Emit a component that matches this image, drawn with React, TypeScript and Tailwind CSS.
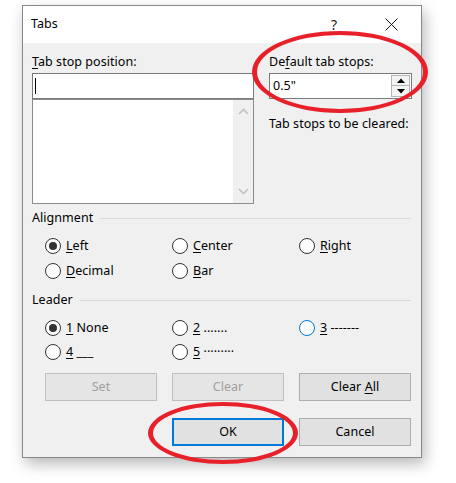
import React from 'react';

const Key: React.FC<{ children: React.ReactNode }> = ({ children }) => (
  <span className="underline underline-offset-2 decoration-1">{children}</span>
);

const Radio: React.FC<{ checked?: boolean; focus?: boolean; children: React.ReactNode }> = ({ checked, focus, children }) => (
  <div className="flex items-center h-4 gap-[5px]">
    <span
      className={`w-4 h-4 shrink-0 rounded-full bg-white flex items-center justify-center ${
        focus ? 'border-[1.5px] border-[#0078d7]' : 'border-[1.3px] border-[#333333]'
      }`}
    >
      {checked && <span className="w-2 h-2 rounded-full bg-[#333333]" />}
    </span>
    <span className="leading-4 whitespace-nowrap">{children}</span>
  </div>
);

const Button: React.FC<{ disabled?: boolean; primary?: boolean; children: React.ReactNode }> = ({ disabled, primary, children }) => (
  <div
    className={`w-[112px] h-[28px] flex items-center justify-center bg-[#e1e1e1] ${
      primary ? 'border-2 border-[#0078d7]' : disabled ? 'border border-[#bfbfbf] bg-[#e5e5e5]' : 'border border-[#adadad]'
    } ${disabled ? 'text-[#a0a0a0]' : 'text-black'}`}
  >
    {children}
  </div>
);

const Section: React.FC<{ title: string; className?: string }> = ({ title, className }) => (
  <div className={`flex items-center h-4 ${className ?? ''}`}>
    <span className="leading-4">{title}</span>
    <div className="flex-1 h-px bg-[#dadada] ml-[7px] mr-[1px]" />
  </div>
);

export default function App() {
  return (
    <div className="relative w-[456px] h-[483px] bg-white pt-[5px] pl-[22px] font-['Noto_Sans',sans-serif] text-[12.5px] tracking-[0.05px] text-black">
      <div className="w-[400px] h-[453px] border border-[#888888] flex flex-col shadow-[3px_6px_14px_rgba(0,0,0,0.28)]">
        {/* title bar */}
        <div className="h-[37px] bg-white flex items-center shrink-0">
          <span className="flex-1 pl-[8px] text-[12.5px]">Tabs</span>
          <span className="w-[46px] text-center text-[14px] text-[#222]">?</span>
          <span className="w-[4px]" />
          <span className="w-[60px] flex items-center justify-center">
            <svg width="13" height="13" viewBox="0 0 13 13">
              <path d="M0.5 0.5L12.5 12.5M12.5 0.5L0.5 12.5" stroke="#111" strokeWidth="1" />
            </svg>
          </span>
        </div>

        {/* body */}
        <div className="flex-1 bg-[#f0f0f0] pl-[9px] pr-[9px] flex flex-col">
          <div className="flex gap-[15px] pt-[11px]">
            <div className="w-[222px] flex flex-col">
              <span className="leading-4 h-4">
                <Key>T</Key>ab stop position:
              </span>
              <div className="mt-[3px] h-[26px] bg-white border border-[#7a7a7a] flex items-center pl-[2px]">
                <span className="w-px h-[16px] bg-black" />
              </div>
              <div className="h-[105px] bg-white border border-[#8c8c8c] flex justify-end">
                <div className="w-[20px] bg-[#f0f0f0] flex flex-col items-center justify-between py-[8px]">
                  <svg width="11" height="7" viewBox="0 0 11 7">
                    <path d="M1 6L5.5 1.5L10 6" fill="none" stroke="#c2c2c2" strokeWidth="1.6" />
                  </svg>
                  <svg width="11" height="7" viewBox="0 0 11 7">
                    <path d="M1 1L5.5 5.5L10 1" fill="none" stroke="#c2c2c2" strokeWidth="1.6" />
                  </svg>
                </div>
              </div>
            </div>
            <div className="w-[143px] flex flex-col">
              <span className="leading-4 h-4">
                De<Key>f</Key>ault tab stops:
              </span>
              <div className="mt-[3px] h-[26px] bg-white border border-[#7a7a7a] flex items-center justify-between pl-[3px] pr-px">
                <span className="leading-4">0.5"</span>
                <div className="flex flex-col">
                  <div className="w-[19px] h-[11px] border border-[#b5b5b5] bg-[#f4f4f4] flex items-center justify-center">
                    <svg width="8" height="5" viewBox="0 0 8 5">
                      <path d="M0 5L4 0.5L8 5Z" fill="#000" />
                    </svg>
                  </div>
                  <div className="w-[19px] h-[11px] border border-[#b5b5b5] border-t-0 bg-[#f4f4f4] flex items-center justify-center">
                    <svg width="8" height="5" viewBox="0 0 8 5">
                      <path d="M0 0L4 4.5L8 0Z" fill="#000" />
                    </svg>
                  </div>
                </div>
              </div>
              <span className="leading-4 h-4 mt-[17px] whitespace-nowrap">Tab stops to be cleared:</span>
            </div>
          </div>

          <Section title="Alignment" className="mt-[6px]" />
          <div className="grid grid-cols-[127px_127px_125px] pl-[13px] mt-[12px] gap-y-[9px]">
            <Radio checked>
              <Key>L</Key>eft
            </Radio>
            <Radio>
              <Key>C</Key>enter
            </Radio>
            <Radio>
              <Key>R</Key>ight
            </Radio>
            <Radio>
              <Key>D</Key>ecimal
            </Radio>
            <Radio>
              <Key>B</Key>ar
            </Radio>
          </div>

          <Section title="Leader" className="mt-[13px]" />
          <div className="grid grid-cols-[127px_127px_125px] pl-[13px] mt-[12px] gap-y-[8px]">
            <Radio checked>
              <Key>1</Key> None
            </Radio>
            <Radio>
              <Key>2</Key> .......
            </Radio>
            <Radio focus>
              <Key>3</Key> -------
            </Radio>
            <Radio>
              <Key>4</Key> ___
            </Radio>
            <Radio>
              <Key>5</Key> ·········
            </Radio>
          </div>

          <div className="flex gap-[15px] pl-[13px] mt-[13px]">
            <Button disabled>Set</Button>
            <Button disabled>Clear</Button>
            <Button>
              <span>
                Clear <Key>A</Key>ll
              </span>
            </Button>
          </div>
          <div className="flex gap-[15px] pl-[140px] mt-[17px]">
            <Button primary>OK</Button>
            <Button>Cancel</Button>
          </div>
        </div>
      </div>

      {/* red annotation ellipses */}
      <div className="absolute left-[252px] top-[31px] w-[176px] h-[82px] rounded-[50%] border-[4px] border-x-[5px] border-[#e8202a]" />
      <div className="absolute left-[148px] top-[402px] w-[150px] h-[62px] rounded-[50%] border-[4px] border-x-[5px] border-[#e8202a]" />
    </div>
  );
}
